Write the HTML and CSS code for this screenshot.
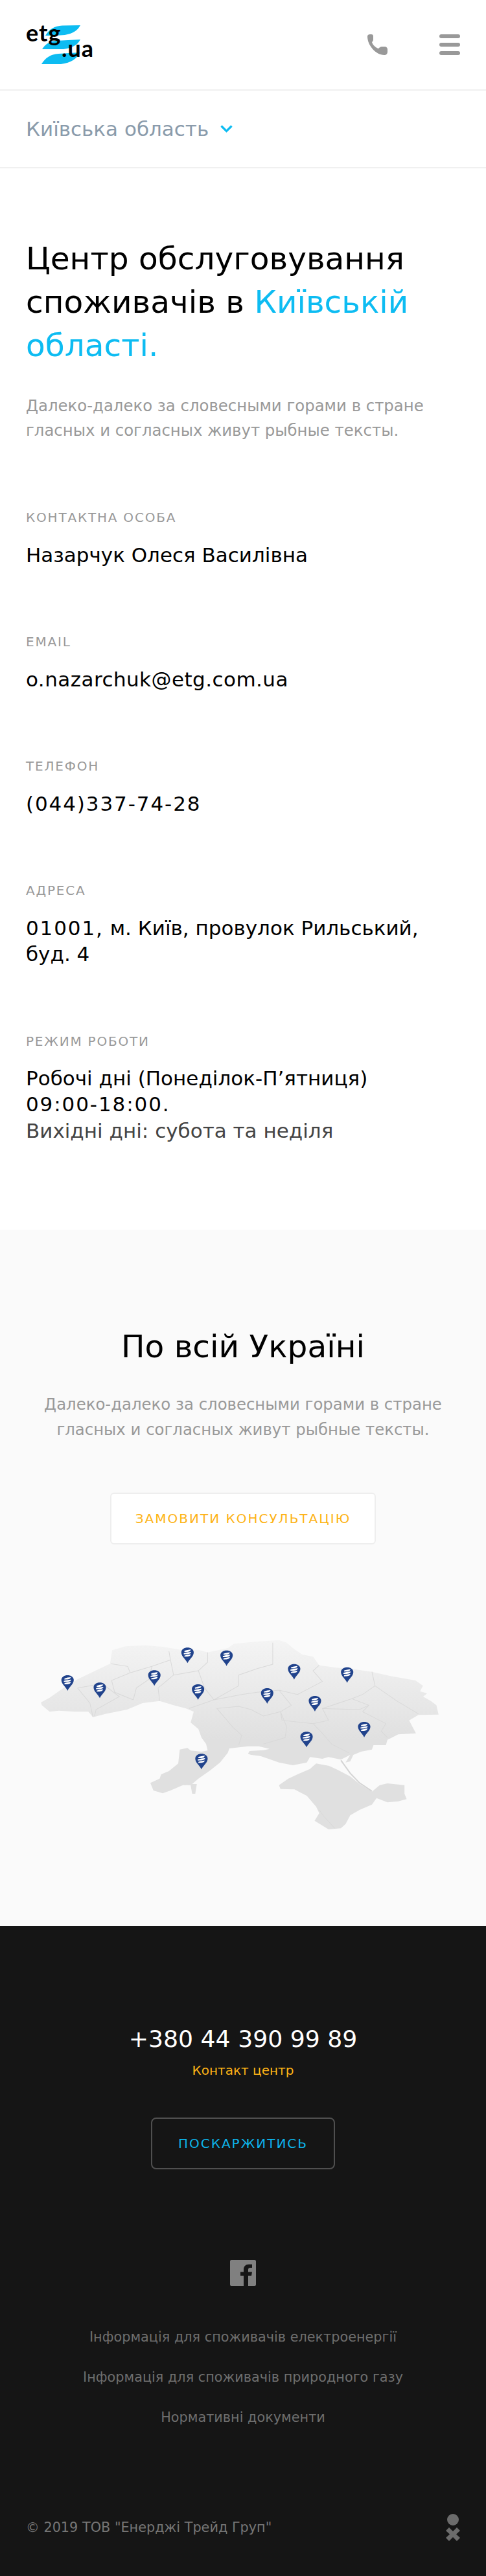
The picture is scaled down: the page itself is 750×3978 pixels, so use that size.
FILE: index.html
```html
<!DOCTYPE html>
<html lang="uk">
<head>
<meta charset="utf-8">
<title>Центр обслуговування</title>
<link rel="stylesheet" href="styles.css">
</head>
<body>
<header class="topbar">
  <a class="logo">
    <svg width="105" height="60" viewBox="0 0 105 60">
      <path class="logo-wing" d="M30 16C36 6 44 1 56 .5L84 0C80 8 72 13 60 15 50 16 40 16 30 16Z"/>
      <path class="logo-wing" d="M25 37C30 29 36 25 46 24L84 22C80 30 72 35 58 37Z"/>
      <path class="logo-wing" d="M24 60C30 50 38 45 50 44L84 42C78 52 70 58 54 60Z"/>
    </svg>
    <span class="logo-etg">etg</span><span class="logo-ua">.ua</span>
  </a>
  <div class="topbar-icons">
    <svg class="icon-phone" width="32" height="32" viewBox="0 0 32 32"><path d="M1 3C1 1 3 0 5 0h2c2 0 3 1 3 3v5c0 2-1 3-2 4 1 4 5 8 10 10 1-1 3-3 5-3h5c2 0 4 2 4 4v4c0 3-2 5-5 5C14 32 1 17 1 3Z"/></svg>
    <div class="burger"><i></i><i></i><i></i></div>
  </div>
</header>
<nav class="region">
  <span>Київська область</span>
  <svg width="19" height="12" viewBox="0 0 19 12"><path d="M1.5 1.5l8 8 8-8" fill="none" stroke="#0dbcf2" stroke-width="3.2"/></svg>
</nav>
<main class="contacts">
  <h1>Центр обслуговування споживачів в <em>Київській області.</em></h1>
  <p class="lead">Далеко-далеко за словесными горами в стране гласных и согласных живут рыбные тексты.</p>
  <dl class="info">
    <div class="row"><dt>Контактна особа</dt><dd>Назарчук Олеся Василівна</dd></div>
    <div class="row"><dt>Email</dt><dd class="latin">o.nazarchuk@etg.com.ua</dd></div>
    <div class="row"><dt>Телефон</dt><dd class="num">(044)337-74-28</dd></div>
    <div class="row"><dt>Адреса</dt><dd><span class="num">01001,</span> м. Київ, провулок Рильський, буд. 4</dd></div>
    <div class="row"><dt>Режим роботи</dt><dd>Робочі дні (Понеділок-П’ятниця) <span class="num nowrap">09:00-18:00.</span><br><span class="soft">Вихідні дні: субота та неділя</span></dd></div>
  </dl>
</main>
<section class="ukraine">
  <h2>По всій Україні</h2>
  <p>Далеко-далеко за словесными горами в стране гласных и согласных живут рыбные тексты.</p>
  <a class="btn-order">Замовити консультацію</a>
  <svg class="map" viewBox="0 0 1568 1440" width="750" height="480" preserveAspectRatio="none">
    <defs>
      <linearGradient id="land" gradientUnits="userSpaceOnUse" x1="0" y1="160" x2="0" y2="620">
        <stop offset="0" stop-color="#f4f4f4"/><stop offset="1" stop-color="#e0e0e0"/>
      </linearGradient>
      <g id="pin">
        <path fill="#21438c" d="M0 36C-6 16-20 6-20-14-20-28-10-36 0-36 10-36 20-28 20-14 20 6 6 16 0 36Z"/>
        <path fill="#fff" d="M-10-21C-4-25 4-26 11-27L8-20C3-16-4-16-10-16ZM-12-10C-5-14 5-15 12-16L9-9C3-5-5-5-12-5ZM-10 1C-4-3 4-4 11-5L8 2C3 6-4 6-10 6Z"/>
      </g>
    </defs>
    <path fill="url(#land)" d="M132 447 160 425 200 385 250 340 300 305 355 268 358 240 362 205 405 187 470 182 530 190 590 205 640 203 670 215 735 195 755 175 830 165 900 158 925 170 945 195 975 225 1010 235 1030 275 1080 285 1150 295 1200 305 1260 325 1340 345 1365 370 1355 395 1378 405 1365 420 1390 440 1408 460 1415 503 1350 505 1320 530 1342 590 1285 595 1250 620 1245 645 1205 645 1200 665 1165 675 1140 690 1130 720 1115 725 1130 690 1100 712 1060 700 1040 708 1000 700 990 725 945 738 900 725 860 705 840 695 810 690 800 685 805 672 850 668 870 662 835 650 800 650 740 660 735 680 710 725 680 760 640 800 620 825 635 825 630 870 620 870 615 830 590 830 550 855 525 868 495 855 485 820 515 800 520 780 545 765 575 730 580 665 605 658 615 670 650 675 670 670 665 640 650 610 640 570 615 540 625 490 600 475 560 460 515 440 460 450 410 480 340 500 300 515 285 490 240 490 190 485 160 490 135 460Z"/>
    <path fill="#e0e0e0" d="M900 830 930 800 960 780 1000 755 1020 730 1060 740 1090 760 1130 790 1160 825 1200 860 1225 830 1250 822 1305 830 1305 870 1312 895 1285 905 1250 910 1215 890 1200 920 1160 945 1130 970 1115 1010 1100 1030 1060 1035 1015 995 1030 960 1020 930 990 880 950 850 905 848Z"/>
    <path class="spit" d="M1100 715 1130 775 1160 820 1200 858"/>
    <path class="border" d="M358 268 412 280 420 310 360 345 370 400 430 435M420 310 490 280 550 250 545 210M490 280 480 340 440 380 430 435M550 250 560 320 510 380 515 440M560 320 640 300 670 260 670 215M640 300 660 380 690 435 610 475M690 435 780 410 830 400 900 390 960 410 1000 380 1040 350 1010 300 1030 275M830 290 880 270 880 170M830 290 770 320 770 370 690 435M900 390 940 460 905 490 850 510 810 480 770 465 700 475 750 560 780 600 770 645M905 490 925 560 920 610 850 640M905 490 910 530 1010 545 1060 530 1040 475 1135 430 1190 460 1170 490 1245 545 1230 580 1250 610M1040 475 1160 480 1190 460M1200 305 1210 370 1170 410 1135 430M1210 370 1280 440 1350 500M1010 545 1040 590 1070 640 1125 680M250 380 290 450 300 515M250 380 330 360 385 420 310 480 305 510M1030 945 1045 975 1080 1030"/>
    <use href="#pin" x="218" y="357"/>
    <use href="#pin" x="322" y="391"/>
    <use href="#pin" x="498" y="334"/>
    <use href="#pin" x="605" y="229"/>
    <use href="#pin" x="731" y="242"/>
    <use href="#pin" x="639" y="399"/>
    <use href="#pin" x="862" y="417"/>
    <use href="#pin" x="949" y="305"/>
    <use href="#pin" x="1120" y="320"/>
    <use href="#pin" x="1016" y="453"/>
    <use href="#pin" x="1175" y="573"/>
    <use href="#pin" x="989" y="619"/>
    <use href="#pin" x="650" y="721"/>
  </svg>
</section>
<footer class="footer">
  <a class="phone">+380 44 390 99 89</a>
  <span class="center">Контакт центр</span>
  <a class="btn-complain">Поскаржитись</a>
  <svg class="fb" width="40" height="40" viewBox="0 0 40 40"><path fill="#808080" d="M2 0h36a2 2 0 0 1 2 2v36a2 2 0 0 1-2 2H28V24.500h5l1-6h-6V15c0-2 1-3 3-3h3V6.700h-5c-5 0-8 3-8 8v3.800h-5v6h5V40H2a2 2 0 0 1-2-2V2a2 2 0 0 1 2-2Z"/></svg>
  <ul class="links">
    <li>Інформація для споживачів електроенергії</li>
    <li>Інформація для споживачів природного газу</li>
    <li>Нормативні документи</li>
  </ul>
  <div class="legal">
    <span>© 2019 ТОВ "Енерджі Трейд Груп"</span>
    <svg width="22" height="42" viewBox="0 0 22 42"><circle cx="11" cy="9" r="9" fill="#6b6b6b"/><path fill="#6b6b6b" d="M5 21l6 6 6-6 5 5-6 5.500 6 5.500-5 5-6-6-6 6-5-5 6-5.500-6-5.500Z"/></svg>
  </div>
</footer>
</body>
</html>
```
FILE: styles.css
```css
* { box-sizing: border-box; }
html, body { margin: 0; padding: 0; }
body { width: 750px; font-family: "DejaVu Sans", sans-serif; color: #000; background: #fff; }

.topbar { display: flex; justify-content: space-between; align-items: center; height: 140px; padding: 0 40px; border-bottom: 2px solid #f0f0f0; }
.logo { position: relative; display: block; width: 105px; height: 60px; }
.logo svg { display: block; }
.logo-wing { fill: #0dbcf2; }
.logo-etg { position: absolute; left: 0; top: -7px; font: 700 36px/36px Lato, sans-serif; letter-spacing: 1px; color: #000; }
.logo-ua { position: absolute; left: 55px; top: 17px; font: 700 36px/36px Lato, sans-serif; letter-spacing: 1px; color: #000; }
.topbar-icons { display: flex; align-items: center; gap: 80px; }
.icon-phone { display: block; fill: #999; }
.burger { display: flex; flex-direction: column; gap: 7px; width: 32px; }
.burger i { display: block; height: 6px; border-radius: 3px; background: #999; }

.region { display: flex; align-items: center; gap: 18px; height: 120px; padding: 0 40px; border-bottom: 2px solid #f0f0f0; font-size: 31px; color: #8a9bab; }

.contacts { padding: 106px 40px 33px; }
h1 { margin: 0; font-weight: 400; font-size: 48.6px; line-height: 67.2px; }
h1 em { font-style: normal; color: #0dbcf2; }
.lead { margin: 40px 0 0; font-size: 24.4px; line-height: 38.4px; color: #999; }
.info { margin: 101px 0 0; }
.row { margin: 0 0 100.2px; }
dt { font-size: 20px; line-height: 28px; letter-spacing: 1.8px; text-transform: uppercase; color: #999; }
dd { margin: 23.5px 0 0; font-size: 31px; line-height: 40.3px; color: #000; }
.num { letter-spacing: 1.9px; }
.latin { letter-spacing: .45px; }
.nowrap { white-space: nowrap; }
.soft { color: #444; }

.ukraine { background: #fafafa; padding: 147px 0 14px; text-align: center; }
h2 { margin: 0; font-weight: 400; font-size: 48.6px; line-height: 67.2px; }
.ukraine p { margin: 37px 40px 0; font-size: 24.4px; line-height: 38.4px; color: #999; }
.btn-order { display: block; width: 410px; height: 80px; margin: 78px auto 0; background: #fff; border: 2px solid #eee; border-radius: 6px; font-size: 20px; line-height: 76px; letter-spacing: 2px; text-transform: uppercase; color: #fdb316; }
.map { display: block; margin-top: 95px; }
.border { fill: none; stroke: #d9d9d9; stroke-width: 1; vector-effect: non-scaling-stroke; }
.spit { fill: none; stroke: #d4d4d4; stroke-width: 2; vector-effect: non-scaling-stroke; }

.footer { background: #151515; padding: 150px 0 54px; display: flex; flex-direction: column; align-items: center; }
.phone { font-size: 36.2px; line-height: 50px; color: #fff; }
.center { margin-top: 9px; font-size: 20px; line-height: 28px; color: #fdb316; }
.btn-complain { display: block; width: 284px; height: 80px; margin-top: 59px; border: 2px solid #4f4f4f; border-radius: 8px; text-align: center; font-size: 20px; line-height: 76px; letter-spacing: 2px; text-transform: uppercase; color: #0db4ea; }
.fb { display: block; margin-top: 140px; }
.links { list-style: none; margin: 65px 0 0; padding: 0; text-align: center; font-size: 20.8px; line-height: 28px; color: #6e6e6e; }
.links li + li { margin-top: 34px; }
.legal { width: 100%; display: flex; justify-content: space-between; align-items: center; margin-top: 135px; padding: 0 40px; font-size: 20.8px; line-height: 28px; color: #757575; }
.legal svg { display: block; }
```
